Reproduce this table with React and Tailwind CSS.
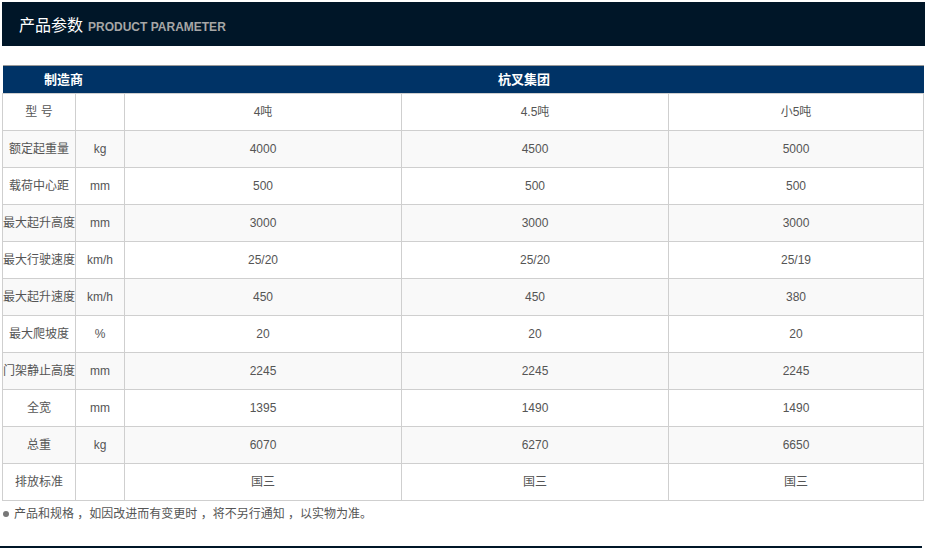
import React from 'react';

const rows = [
  ['型 号', '', '4吨', '4.5吨', '小5吨'],
  ['额定起重量', 'kg', '4000', '4500', '5000'],
  ['载荷中心距', 'mm', '500', '500', '500'],
  ['最大起升高度', 'mm', '3000', '3000', '3000'],
  ['最大行驶速度', 'km/h', '25/20', '25/20', '25/19'],
  ['最大起升速度', 'km/h', '450', '450', '380'],
  ['最大爬坡度', '%', '20', '20', '20'],
  ['门架静止高度', 'mm', '2245', '2245', '2245'],
  ['全宽', 'mm', '1395', '1490', '1490'],
  ['总重', 'kg', '6070', '6270', '6650'],
  ['排放标准', '', '国三', '国三', '国三'],
];

const font = { fontFamily: '"Liberation Sans", "Noto Sans CJK SC", sans-serif' };

export default function App() {
  return (
    <div className="w-[927px] h-[548px] bg-white relative overflow-hidden" style={font}>
      <div className="mx-[2px] mt-[2px] h-[44px] bg-[#001628] flex items-center pl-[17px] pt-[4px] gap-[5px]">
        <span className="text-white text-[16px] leading-none">产品参数</span>
        <span className="text-[#a6a6a6] text-[12px] font-bold leading-none mt-[2px]">PRODUCT PARAMETER</span>
      </div>

      <table className="ml-[2px] mt-[19px] w-[921px] border-collapse table-fixed text-[12px] text-[#555]">
        <colgroup>
          <col className="w-[73px]" />
          <col className="w-[49px]" />
          <col className="w-[277px]" />
          <col className="w-[267px]" />
          <col className="w-[255px]" />
        </colgroup>
        <thead>
          <tr className="bg-[#003366] text-white h-[28px] border-t border-[#999]">
            <th colSpan={2} className="font-bold text-[13px] p-0">制造商</th>
            <th colSpan={3} className="font-bold text-[13px] p-0">杭叉集团</th>
          </tr>
        </thead>
        <tbody>
          {rows.map((r, i) => (
            <tr key={i} className={i % 2 ? 'bg-[#f9f9f9] h-[37px]' : 'bg-white h-[37px]'}>
              {r.map((c, j) => (
                <td key={j} className="border border-[#cfcfcf] text-center p-0 whitespace-nowrap">
                  {c}
                </td>
              ))}
            </tr>
          ))}
        </tbody>
      </table>

      <div className="mt-[4px] ml-[3px] flex items-center gap-[5px] text-[12px] text-[#555]">
        <span className="w-[6px] h-[6px] rounded-full bg-[#777]" />
        <span>产品和规格 ，如因改进而有变更时 ，将不另行通知 ，以实物为准。</span>
      </div>

      <div className="absolute left-0 right-[5px] bottom-0 h-[2px] bg-[#001628]" />
    </div>
  );
}
